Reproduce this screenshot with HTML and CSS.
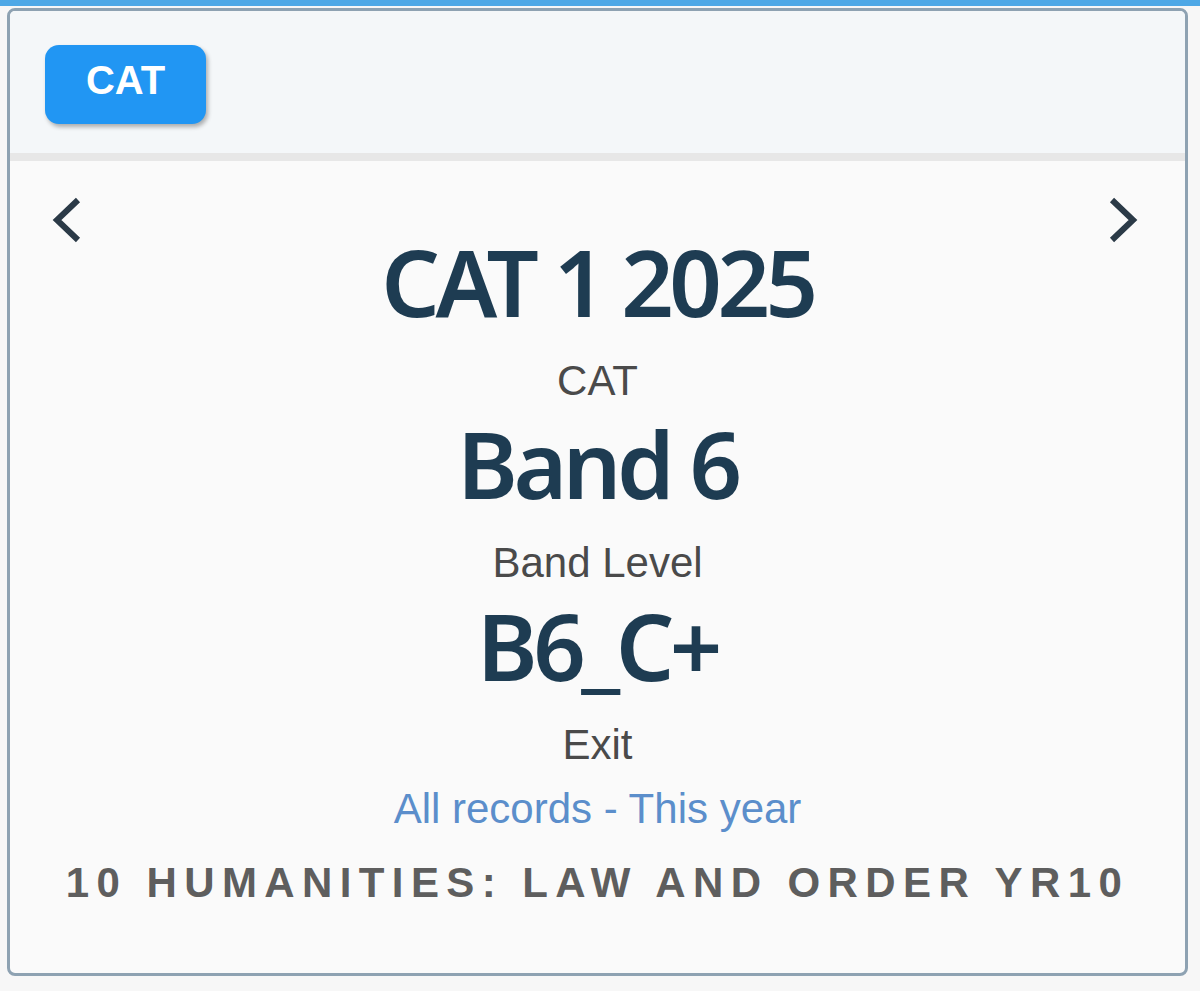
FILE: index.html
```html
<!DOCTYPE html>
<html>
<head>
<meta charset="utf-8">
<link rel="stylesheet" href="styles.css">
</head>
<body>
<div class="topbar"></div>
<div class="card">
  <div class="card-header">
    <span class="badge">CAT</span>
  </div>
  <div class="card-body">
    <div class="nav-row">
      <button class="nav-btn" aria-label="Previous">
        <svg width="34" height="50" viewBox="0 0 34 50"><path d="M28 5 L7 25 L28 45" fill="none" stroke="#2b3a47" stroke-width="6"/></svg>
      </button>
      <button class="nav-btn" aria-label="Next">
        <svg width="34" height="50" viewBox="0 0 34 50"><path d="M6 5 L27 25 L6 45" fill="none" stroke="#2b3a47" stroke-width="6"/></svg>
      </button>
    </div>
    <div class="content">
      <div class="big">CAT 1 2025</div>
      <div class="label">CAT</div>
      <div class="big">Band 6</div>
      <div class="label">Band Level</div>
      <div class="big">B6_C+</div>
      <div class="label">Exit</div>
      <div class="link">All records - This year</div>
      <div class="subject">10 HUMANITIES: LAW AND ORDER YR10</div>
    </div>
  </div>
</div>
</body>
</html>
```
FILE: styles.css
```css
html, body {
  margin: 0;
  padding: 0;
  background: #f7f7f7;
}
.topbar {
  height: 6px;
  background: #4ea8e6;
}
.card {
  margin: 2px 12px 0 7px;
  height: 968px;
  box-sizing: border-box;
  border: 3px solid #8ea2b2;
  border-radius: 8px;
  background: #fafafa;
  overflow: hidden;
  display: flex;
  flex-direction: column;
}
.card-header {
  height: 150px;
  box-sizing: border-box;
  background: #f4f7f9;
  border-bottom: 8px solid #e7e7e7;
  padding: 34px 0 0 35px;
}
.badge {
  display: inline-flex;
  align-items: center;
  justify-content: center;
  width: 161px;
  height: 79px;
  box-sizing: border-box;
  padding-bottom: 9px;
  background: #2196f3;
  color: #fff;
  border-radius: 14px;
  box-shadow: 2px 3px 4px rgba(0,0,0,0.3);
  font-family: "Liberation Sans", Arial, sans-serif;
  font-weight: bold;
  font-size: 40px;
}
.card-body {
  position: relative;
  flex: 1;
}
.nav-row {
  position: absolute;
  left: 0;
  right: 0;
  top: 34px;
  display: flex;
  justify-content: space-between;
  padding: 0 45px 0 40px;
}
.nav-btn {
  background: none;
  border: 0;
  padding: 0;
  cursor: pointer;
}
.content {
  display: flex;
  flex-direction: column;
  align-items: center;
  padding-top: 66px;
}
.big {
  font-family: "Noto Sans", sans-serif;
  font-weight: 600;
  font-size: 92px;
  letter-spacing: -4.5px;
  color: #1e3c52;
  line-height: 110px;
}
.label {
  font-family: "Liberation Sans", Arial, sans-serif;
  font-size: 42px;
  color: #4a4a4a;
  line-height: 56px;
  margin-top: 16px;
}
.link {
  font-family: "Liberation Sans", Arial, sans-serif;
  font-size: 42px;
  color: #5b8ecb;
  line-height: 56px;
  margin-top: 8px;
}
.subject {
  font-family: "Liberation Sans", Arial, sans-serif;
  font-size: 42px;
  font-weight: bold;
  letter-spacing: 7.4px;
  color: #5e5e5e;
  line-height: 64px;
  margin-top: 14px;
}
```
